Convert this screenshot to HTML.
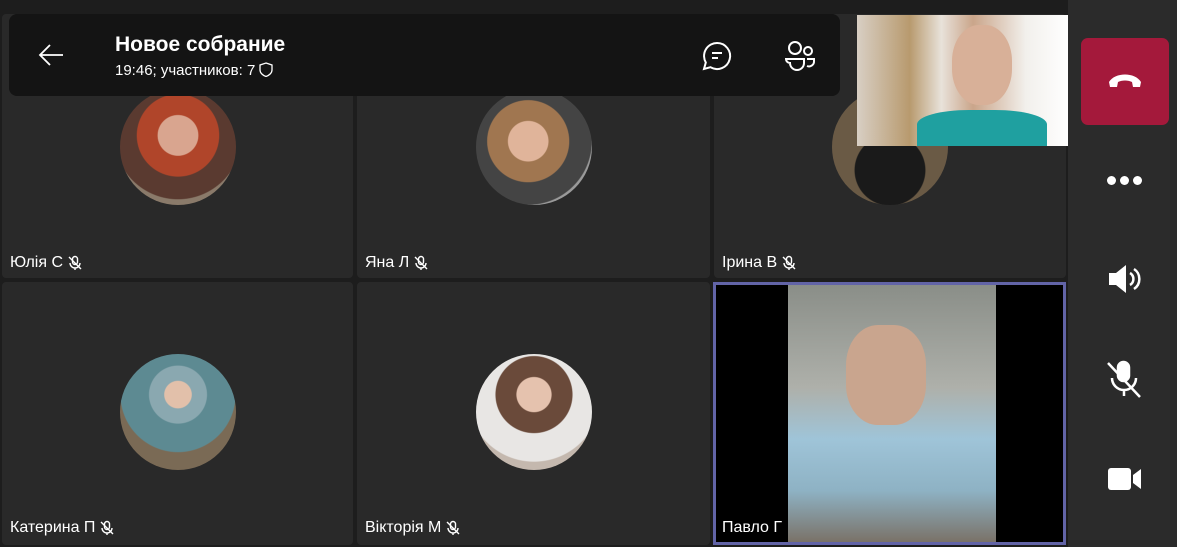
<!DOCTYPE html>
<html><head><meta charset="utf-8"><style>
body{margin:0;width:1177px;height:547px;background:#1d1d1d;overflow:hidden;position:relative;font-family:"Liberation Sans",sans-serif;color:#fff}
.t{position:absolute;background:#292929;border-radius:4px}
.av{position:absolute;width:116px;height:116px;border-radius:50%}
.nm{position:absolute;font-size:16px;left:8px;display:flex;align-items:center;gap:4px}
.side{position:absolute;left:1068px;top:0;width:109px;height:547px;background:#2b2b2b}
</style></head><body>
<div class="t" style="left:2px;top:14px;width:351px;height:264px">
 <div class="av" style="left:118px;top:75px;background:radial-gradient(circle at 50% 40%,#d9a58f 0 22%,#b0452a 23% 45%,#5a3a30 46% 70%,#8a7a6a 71%)"></div>
 <div class="nm" style="top:240px">Юлія С <svg width="16" height="16" viewBox="0 0 16 16" fill="none" stroke="#fff" stroke-width="1.4"><rect x="5.5" y="1.5" width="5" height="8" rx="2.5"/><path d="M3 8a5 5 0 0 0 10 0M8 13v2M2 2l12 12"/></svg></div></div>
<div class="t" style="left:357px;top:14px;width:353px;height:264px">
 <div class="av" style="left:119px;top:75px;background:radial-gradient(circle at 45% 45%,#e0b49a 0 22%,#a07650 23% 45%,#444 46% 70%,#9a9a9a 71%)"></div>
 <div class="nm" style="top:240px">Яна Л <svg width="16" height="16" viewBox="0 0 16 16" fill="none" stroke="#fff" stroke-width="1.4"><rect x="5.5" y="1.5" width="5" height="8" rx="2.5"/><path d="M3 8a5 5 0 0 0 10 0M8 13v2M2 2l12 12"/></svg></div></div>
<div class="t" style="left:714px;top:14px;width:352px;height:264px">
 <div class="av" style="left:118px;top:75px;background:radial-gradient(circle at 50% 70%,#1a1a1a 0 35%,#6a5a45 36%)"></div>
 <div class="nm" style="top:240px">Ірина В <svg width="16" height="16" viewBox="0 0 16 16" fill="none" stroke="#fff" stroke-width="1.4"><rect x="5.5" y="1.5" width="5" height="8" rx="2.5"/><path d="M3 8a5 5 0 0 0 10 0M8 13v2M2 2l12 12"/></svg></div></div>
<div class="t" style="left:2px;top:282px;width:351px;height:263px">
 <div class="av" style="left:118px;top:72px;background:radial-gradient(circle at 50% 35%,#e2c0aa 0 14%,#8aa8b0 15% 30%,#5d8a92 31% 60%,#7a6a55 61%)"></div>
 <div class="nm" style="top:237px">Катерина П <svg width="16" height="16" viewBox="0 0 16 16" fill="none" stroke="#fff" stroke-width="1.4"><rect x="5.5" y="1.5" width="5" height="8" rx="2.5"/><path d="M3 8a5 5 0 0 0 10 0M8 13v2M2 2l12 12"/></svg></div></div>
<div class="t" style="left:357px;top:282px;width:353px;height:263px">
 <div class="av" style="left:119px;top:72px;background:radial-gradient(circle at 50% 35%,#e5c2ae 0 18%,#6a4a3a 19% 40%,#e8e6e4 41% 70%,#c4b8ae 71%)"></div>
 <div class="nm" style="top:237px">Вікторія М <svg width="16" height="16" viewBox="0 0 16 16" fill="none" stroke="#fff" stroke-width="1.4"><rect x="5.5" y="1.5" width="5" height="8" rx="2.5"/><path d="M3 8a5 5 0 0 0 10 0M8 13v2M2 2l12 12"/></svg></div></div>
<div style="position:absolute;left:713px;top:282px;width:347px;height:257px;border:3px solid #6264a7;background:#000">
 <div style="position:absolute;left:72px;top:0;width:208px;height:257px;background:linear-gradient(180deg,#8a8e88 0%,#aeb0aa 40%,#9fc4d8 60%,#8eb2c4 80%,#7a7268 100%)"></div>
 <div style="position:absolute;left:130px;top:40px;width:80px;height:100px;border-radius:40%;background:#c9a58e"></div>
 <div class="nm" style="top:234px;left:6px">Павло Г</div></div>
<div style="position:absolute;left:857px;top:15px;width:211px;height:131px;background:linear-gradient(90deg,#d8cfc4 0%,#b89a6e 25%,#e8e2da 40%,#caa58a 55%,#f2f0ec 80%,#fff 100%)">
 <div style="position:absolute;left:95px;top:10px;width:60px;height:80px;border-radius:45%;background:#d8b098"></div>
 <div style="position:absolute;left:60px;top:95px;width:130px;height:36px;border-radius:40% 40% 0 0;background:#1fa0a0"></div></div>
<div style="position:absolute;left:9px;top:14px;width:831px;height:82px;background:#141414;border-radius:8px">
 <svg style="position:absolute;left:28px;top:27px" width="28" height="28" viewBox="0 0 28 28" fill="none" stroke="#fff" stroke-width="1.8"><path d="M26 14H3M13 4L3 14l10 10"/></svg>
 <div style="position:absolute;left:106px;top:19px;font-size:21px;font-weight:bold">Новое собрание</div>
 <div style="position:absolute;left:106px;top:48px;font-size:15px">19:46; участников: 7 <svg width="14" height="15" viewBox="0 0 14 15" fill="none" stroke="#fff" stroke-width="1.3" style="vertical-align:-2px"><path d="M7 1l6 2v5c0 3-3 5.5-6 6.5C4 13.5 1 11 1 8V3z"/></svg></div>
 <svg style="position:absolute;left:692px;top:26px" width="32" height="32" viewBox="0 0 32 32" fill="none" stroke="#fff" stroke-width="2"><path d="M16 3a13 13 0 1 1-6.5 24.2L3 29l1.8-6.5A13 13 0 0 1 16 3z"/><path d="M11 13h10M11 18h6"/></svg>
 <svg style="position:absolute;left:774px;top:26px" width="34" height="32" viewBox="0 0 34 32" fill="none" stroke="#fff" stroke-width="2"><circle cx="12" cy="8" r="6"/><circle cx="25" cy="11" r="4"/><path d="M3 19h18v4a7 7 0 0 1-14 0 4 4 0 0 1-4-4zM24 19h7v2a5 5 0 0 1-7 5"/></svg>
</div>
<div class="side">
 <div style="position:absolute;left:13px;top:38px;width:88px;height:87px;background:#a4193b;border-radius:7px">
  <svg style="position:absolute;left:26px;top:32px" width="36" height="20" viewBox="0 0 36 20"><path d="M2 12C8 2 28 2 34 12l-1 5h-7l-1-5c-4-2-10-2-14 0l-1 5H3z" fill="#fff"/></svg></div>
 <div style="position:absolute;left:39px;top:176px;display:flex;gap:4px"><i style="width:9px;height:9px;border-radius:50%;background:#fff"></i><i style="width:9px;height:9px;border-radius:50%;background:#fff"></i><i style="width:9px;height:9px;border-radius:50%;background:#fff"></i></div>
 <svg style="position:absolute;left:39px;top:263px" width="36" height="32" viewBox="0 0 36 32"><path d="M2 10h7l10-8v28l-10-8H2z" fill="#fff"/><path d="M23 10a7 7 0 0 1 0 12M27 6a12 12 0 0 1 0 20" stroke="#fff" stroke-width="2.5" fill="none"/></svg>
 <svg style="position:absolute;left:38px;top:360px" width="36" height="38" viewBox="0 0 36 38" fill="none" stroke="#fff" stroke-width="2.5"><rect x="12" y="2" width="11" height="19" rx="5.5" fill="#fff"/><path d="M6 18a12 12 0 0 0 24 0M18 30v6M2 3l32 34"/></svg>
 <svg style="position:absolute;left:39px;top:466px" width="36" height="26" viewBox="0 0 36 26"><rect x="1" y="2" width="23" height="22" rx="3" fill="#fff"/><path d="M26 9l8-6v20l-8-6z" fill="#fff"/></svg>
</div>
</body></html>
